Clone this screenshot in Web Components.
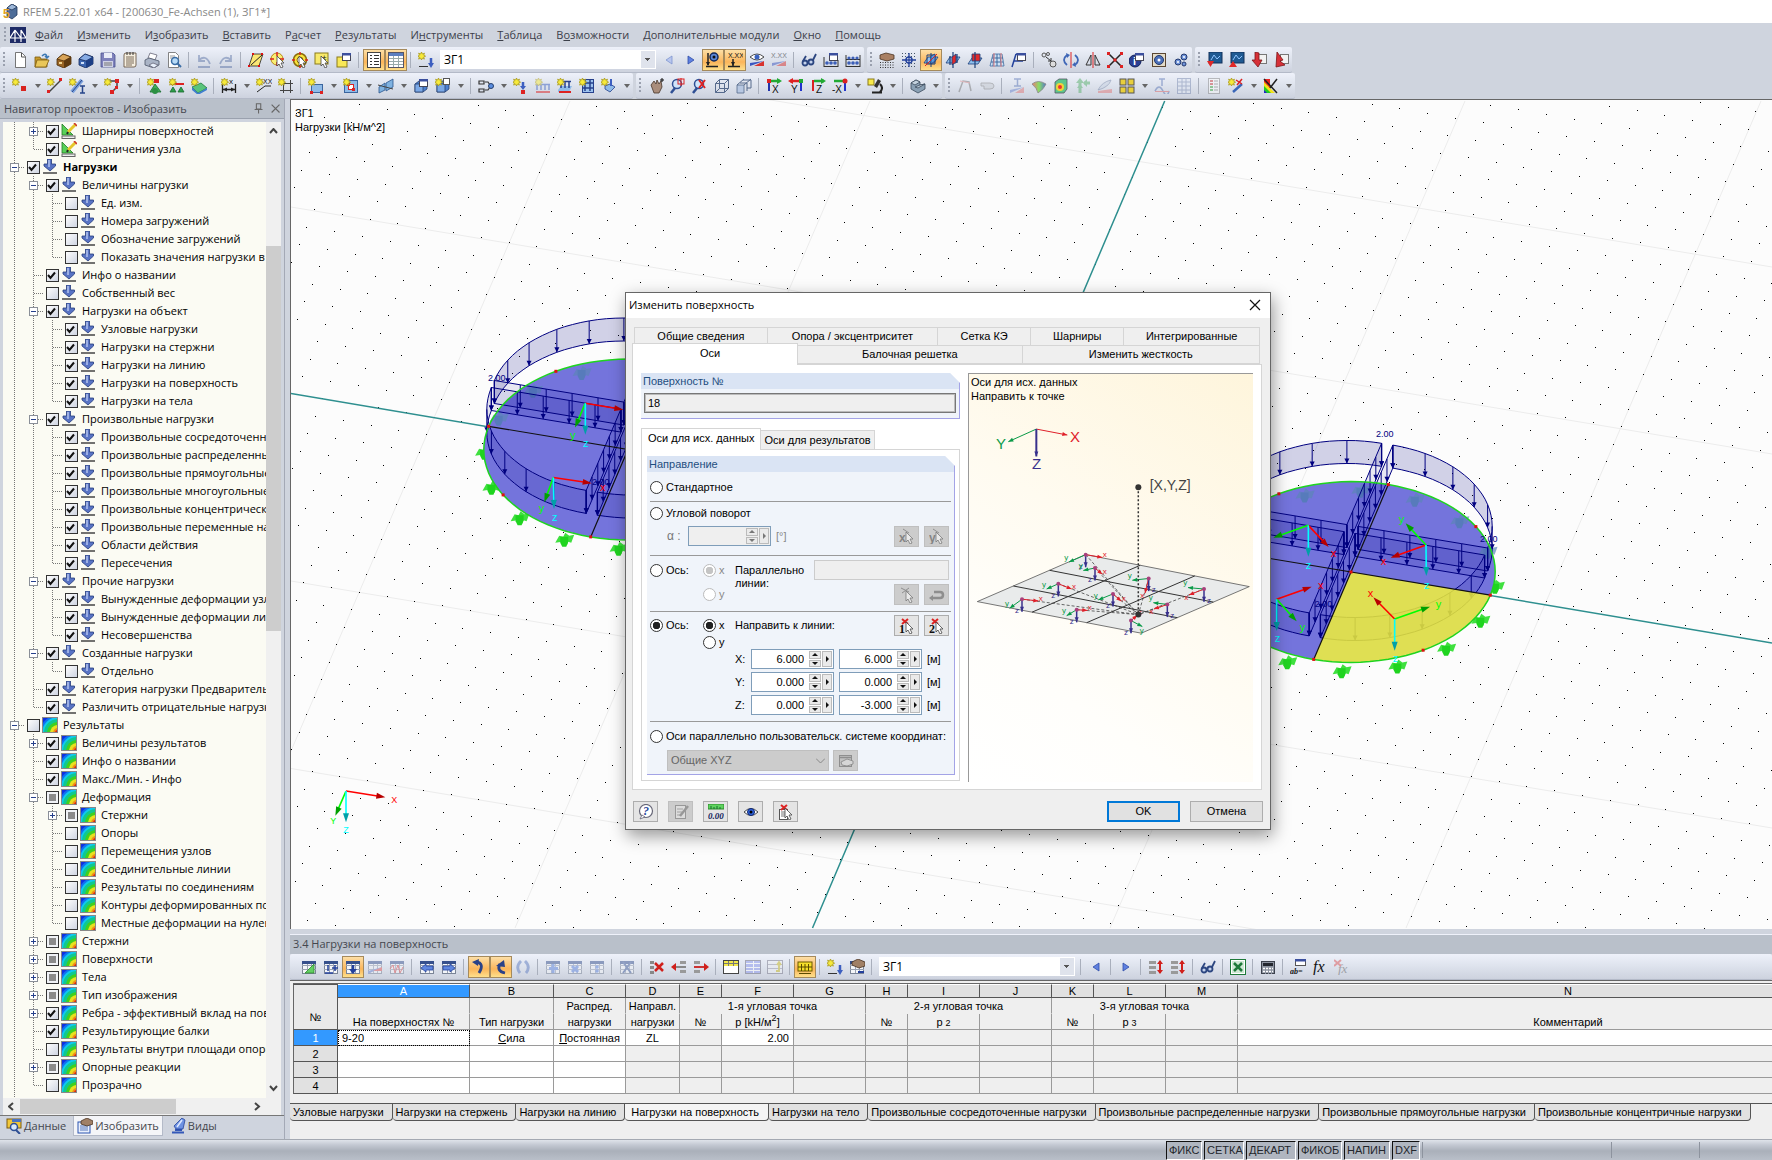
<!DOCTYPE html>
<html lang="ru">
<head>
<meta charset="utf-8">
<title>RFEM 5.22.01 x64 - [200630_Fe-Achsen (1), ЗГ1*]</title>
<style>
html,body{height:100%}
body{margin:0;overflow:hidden;background:#cfd4de;color:#000;font:11px/14px "Open Sans","Noto Sans",sans-serif}
</style>
</head>
<body>
<rfem-app></rfem-app>
<script>
/* ---------- drawing helpers ---------- */
const s=(d,c='#333',w=1)=>`<path d="${d}" fill="none" stroke="${c}" stroke-width="${w}"/>`;
const f=(d,c,k)=>`<path d="${d}" fill="${c}"${k?` stroke="${k}" stroke-width=".8"`:''}/>`;
const r=(x,y,w,h,c,k)=>`<rect x="${x}" y="${y}" width="${w}" height="${h}" fill="${c}"${k?` stroke="${k}"`:''}/>`;
const o=(x,y,q,c,k='none',w=1)=>`<circle cx="${x}" cy="${y}" r="${q}" fill="${c}" stroke="${k}" stroke-width="${w}"/>`;
const tx=(x,y,t,z,c='#111',e='')=>`<text x="${x}" y="${y}" font-size="${z}" fill="${c}" ${e}>${t}</text>`;
const star=f('M3.5 0 4.4 2 6.5 1.2 5.7 3.2 7.6 4.2 5.6 5 6.4 7.1 4.3 6.2 3.5 8 2.6 6.2.6 7.1 1.4 5-.4 4.2 1.5 3.2.6 1.2 2.6 2Z','#f7ea3a','#a99a1c');
const cur=f('M7 4v10l2-2 2 4 2-1-2-4h3Z','#fff','#444');
const redx=s('M3 1l6 5M9 1L3 6','#d22',2);
const cube=f('M2 6l4-3h8v8l-4 3H2Z','#4a7fd0','#26406e')+f('M2 6h8v8H2Z','#7aa8e6','#26406e');
const win=r(6.5,1.5,8,7,'#fff','#445')+r(6,1,9,2.5,'#3b4f9e');
const supp=(x,y)=>f(`M${x} ${y}l3 5h-6Z`,'#2d9d4a','#176b2e');
const sheet=r(1.5,2.5,13,12,'#f4f6f9','#7a8496')+s('M1 6.500h14M1 10.500h14M6.500 3v11M10.500 3v11','#9aa2b2')+r(1,2,14,3,'#36508c');
const grad='url(#rb)';
const I={
new:f('M3.500.5h6l4 4v11h-10Z','#fff','#555')+s('M9.500 1v4h4','#555'),
open:f('M1 5h5l1 2h6v8H1Z','#c79a2c','#7c5a10')+f('M3 8h12l-3 7H1Z','#e9c75a','#7c5a10')+s('M8 4q4-4 5 1M11 4l2 2 2-2','#3c78b4',1.500),
boxb:f('M1 7l6-5 8 3v7l-7 4-7-3Z','#9a6424','#4b2d0b')+f('M1 7l6-5 8 3-7 4Z','#d8a458','#4b2d0b')+r(3,10,3,2,'#f0d490')+f('M8 9l7-4v7l-7 4Z','#5f3a10'),
boxa:f('M1 7l6-5 8 3v7l-7 4-7-3Z','#3c66b0','#14295a')+f('M1 7l6-5 8 3-7 4Z','#86abe4','#14295a')+r(3,10,3,2,'#cfe0fa')+f('M8 9l7-4v7l-7 4Z','#1d3f86'),
save:f('M1 1h12l2 2v12H1Z','#7f82bc','#4a5090')+r(4,1,8,5,'#e9ecf8')+r(3,9,10,6,'#cfd2e6')+s('M4 11h8M4 13h8','#777'),
list:f('M2 3q0-2 2-2h10v12q0 2-2 2H2Z','#f6efe0','#5a4632')+s('M4 5h8M4 7h8M4 9h8M4 11h8M4 13h6','#7a6a58')+s('M5 0v3M8 0v3M11 0v3','#333'),
print:f('M4 6l2-5 7 2-2 5Z','#fff','#667')+f('M1 8l4-2 10 3v4l-5 3-9-3Z','#aab4c6','#4b5568')+f('M5 13l4-2 5 2-4 3Z','#e8f0fb','#667'),
prev:f('M2.500.5h7l3 3v12h-10Z','#fff','#666')+s('M4 4h5M4 6h6','#999')+o(9,9,3.500,'#b8dbf7','#3b6ea6',1.500)+s('M11 11l4 4','#3b6ea6',2),
undo:s('M3 8q7-6 11 4M3 3v6h6M2 15h12','#5f76a8',1.800),
redo:s('M13 8Q6 2 2 12M13 3v6H7M2 15h12','#5f76a8',1.800),
para:f('M5 2h10l-4 12H1Z','#fbe774','#222')+s('M3 13L14 3','#222')+r(4,1,2,2,'#d11')+r(13,1,2,2,'#d11')+r(0,13,2,2,'#d11')+r(10,13,2,2,'#d11'),
cirY:o(7,7,6,'#fbef72','#b58a1a')+s('M7 0v4M7 10v4M0 7h4M10 7h4','#d22',1.500)+cur,
ringY:o(8,8,6.500,'#f8e23c','#8a6c0a',1.500)+o(8,8,3,'#fff','#8a6c0a')+s('M8 0v3M8 13v3M0 8h3M13 8h3','#d22',1.500)+cur,
selY:r(1,1,13,11,'#f8ea6a','#8a7a1a')+tx(8,8,'±',8)+cur,
winY:r(1,5,10,10,'#f8e858','#8a7a1a')+win,
navA:r(1.500,.5,13,15,'#fff','#444')+s('M4 3.500h2M8 3.500h5M4 6.500h2M8 6.500h5M4 9.500h2M8 9.500h5M4 12.500h2M8 12.500h5','#333'),
tabA:r(.5,.5,15,15,'#fff','#556')+r(1,1,14,3,'#5b7fc0')+s('M1 6.500h14M1 9.500h14M1 12.500h14M5.500 4v11M10.500 4v11','#9aa'),
loadN:star+s('M1 14.500h9','#333')+s('M13 6v7','#3d5fc0',2.500)+f('M10 11h6l-3 5Z','#3d5fc0'),
prv:f('M11 4v8L5 8Z','#b8c6ee','#7f95cf'),
nxt:f('M5 4v8l6-4Z','#5f80e0','#2e4ca8'),
prd:f('M11 4v8L5 8Z','#5f80e0','#2e4ca8'),
eyeL:o(9,5,4,'#5c86d6','#14295a',1.500)+o(9,5,1.500,'#111')+s('M3 1v12M1 14.500h12','#222',1.500)+f('M1 10h4l-2 4Z','#222'),
xxL:tx(1,6,'X.XX',7)+s('M6 7v7M1 14.500h12','#222',1.500)+f('M4 10h4l-2 4Z','#222'),
eyeG:f('M1 5q7-6 14 0q-7 6-14 0Z','#fff','#222')+o(8,5,2.500,'#3a62c0')+f('M1 14V11l14-2Z','#3b55c0')+f('M15 9v5H5Z','#d8332f'),
xxG:tx(0,6,'X.XX',7)+f('M1 14V11l14-2Z','#3b55c0')+f('M15 9v5H5Z','#d8332f'),
glas:o(4,11,2.500,'#c4d2ec','#2c4680',1.800)+o(10,10,2.500,'#c4d2ec','#2c4680',1.800)+s('M2 9L5 4M12 8l3-6','#2c4680',1.800),
absA:win+s('M1 5v10M15 8v7M1 14.500h14','#333')+o(4,11,1.800,'#3c5fb8')+o(8,11,1.800,'#3c5fb8')+o(12,11,1.800,'#3c5fb8'),
abs:s('M1 3v12M15 3v12M1 14.500h14M1 7.500h14','#333')+o(4,6,1.600,'#3c5fb8')+o(8,6,1.600,'#3c5fb8')+o(12,6,1.600,'#3c5fb8')+o(4,11,1.800,'#3c5fb8')+o(8,11,1.800,'#3c5fb8')+o(12,11,1.800,'#3c5fb8'),
hand:f('M1 3l6-2 8 2v4l-7 2-7-2Z','#a98064','#4a3322')+`<path d="M1 10.500h14M1 13h14M1 15.500h14" stroke="#333" stroke-dasharray="1 1.500"/>`,
snap:`<path d="M1 1.500h14M1 4.500h14M1 11.500h14M1 14.500h14" stroke="#456" stroke-dasharray="1 2"/>`+o(8,8,3,'#fff','#24429c',1.500)+s('M8 1v14M1 8h14','#24429c',1.300),
pl:f('M1 11l4-6h10l-4 6Z','#8fc0ee','#1c3e78')+s('M8 1v14M4 3h8v9H4Z','#1c3e78')+f('M8 4l4-2v7l-4 3Z','#5b9ae0','#1c3e78')+s('M2 14l12-12','#d22'),
pl2:f('M1 11l4-6h10l-4 6Z','#8fc0ee','#1c3e78')+s('M8 0v16M5 4v9M12 2v9','#1c3e78',1.200)+f('M7 5l4-3v8l-4 3Z','#e22a2a','#1c3e78'),
pl3:f('M1 12l4-6h10l-4 6Z','#8fc0ee','#1c3e78')+f('M5 2h8v7H5Z','#e22a2a','#1c3e78')+s('M8 0v16','#1c3e78',1.200),
gridP:f('M4 2h9l2 12H1Z','#cfe2f5','#3d6a9e')+s('M3 6h11M2 10h12M8 2v12M5 2L4 14M11 2l1 12','#3d6a9e')+s('M5 1v14M12 1v14','#e88'),
planes:s('M1 15L5 2M3 9h9M5 2h5','#24429c',1.500)+win,
cp:o(3,3,2,'none','#555')+o(12,12,3,'#ddd','#555')+s('M5 5l5 4M10 6v3H7','#333')+o(7,2,1.500,'none','#555'),
rot:s('M4 3q-6 5 0 10M12 3q6 5 0 10','#3f66b6',1.800)+s('M8 0v16','#d22')+f('M3 1l4 2-3 3ZM13 15l-4-2 3-3Z','#3f66b6'),
mir:s('M6 3v10H1ZM10 3v10h5Z','#333')+s('M8 0v16','#d22'),
xred:s('M2 2l12 12M14 2L2 14','#222',1.500)+r(0,0,3,3,'#d22')+r(13,0,3,3,'#d22')+r(0,13,3,3,'#d22')+r(13,13,3,3,'#d22')+r(6.500,6.500,3,3,'#d22'),
info:o(6,9,6,'#2a3f94','#10205c')+tx(4,13,'i',11,'#fff','font-weight="bold"')+win,
gear:r(1.500,1.500,13,13,'#e4dcc8','#5a4632')+o(8,8,4.500,'#4b6fb8','#22386e')+o(8,8,1.500,'#fff'),
gears:o(5,10,3,'#6f93d8','#22386e')+o(11,5,3,'#6f93d8','#22386e')+o(11,12,2,'#6f93d8','#22386e')+o(5,10,1,'#fff')+o(11,5,1,'#fff'),
modA:r(2,0,13,11,'#1f5a92','#12305a')+s('M4 8l3-5 3 4 3-3','#8fc4ff')+f('M0 9h7l-3.500 6Z','#e02828'),
modB:r(2,0,13,11,'#1f5a92','#12305a')+s('M4 8l3-5 3 4 3-3','#8fc4ff')+f('M0 15h8l-4-6Z','#e02828'),
modC:r(7.500,2.500,8,9,'#f2f2f2','#777')+f('M4 0l4 1v7h3l-4 7-6-7h3Z','#d63038','#7c1518'),
modD:r(7.500,2.500,8,9,'#f2f2f2','#777')+f('M4 0l6 8-3 1 5 4-9 2Z','#d63038','#7c1518'),
node:star+r(9,8,5,5,'#d8241f'),
line:s('M2 14L14 2','#444',1.500)+star+r(0,12,3,3,'#d22')+r(12,0,3,3,'#d22'),
memb:s('M3 14L13 2','#7aa0dc',4)+s('M3 14L13 2','#27458a')+star+s('M11 8h5M11 15h5M13.500 8v7','#27458a',1.500),
poly:s('M4 3h9v6l-5 5','#444',1.500)+star+r(11,1,4,4,'#d22')+r(11,8,3,3,'#d22')+r(6,12,4,4,'#d22'),
sNode:f('M8 6l6 8H3Z','#3fae55','#176b2e')+o(8,13,3,'#2b8f42')+star+r(7,1,5,4,'#d22'),
sLine:s('M2 6h13','#d22',2)+supp(4,9)+supp(12,9)+star,
sSurf:f('M1 9l9-4 6 5-9 5Z','#59c47c','#1e7a3c')+f('M1 9v3l6 5v-2ZM16 10v2l-9 5v-2Z','#3f7fd0')+star,
dim:s('M1.500 6v9M14.500 6v9M1 11.500h14','#222',1.300)+f('M2 11.500l4-2v4ZM14 11.500l-4-2v4Z','#222')+tx(8,6,'x',8)+star,
dimx:s('M1 14L9 8h6','#222')+tx(7,6,'XX',7)+star,
gl:s('M5.500 2v13M12.500 2v13M2 5.500h13M2 12.500h13','#444')+star,
surf:r(3.500,6.500,11,8,'#8fbbe8','#3b659e')+star+r(12,13,3,3,'#d22')+r(2,13,3,3,'#d22'),
open2:r(1.500,2.500,13,12,'#8fbbe8','#3b659e')+r(5.500,6.500,5,5,'#fff','#d22')+r(4,5,3,3,'#d22')+r(9,10,3,3,'#d22')+star,
thick:f('M1 9l6-4v7l-6 3ZM8 5l7-4v8l-7 4Z','#7fb2e0','#2b568e')+s('M0 7l15 4','#444'),
solid:cube+win,
solidN:cube+r(8.500,.5,6,6,'#fff','#555')+star,
join:s('M1 3h5v3H1ZM1 11h5v3H1ZM7 4h3l2 3M7 12h3l2-3','#333',1.200)+o(13,8,2.500,'#5b8ee0','#26406e'),
ldN:star+s('M10 4v6','#3d5fc0',2.500)+f('M7 8h6l-3 4Z','#3d5fc0')+r(8,12,4,4,'#d22'),
ldL:s('M2 6v6M6 6v6M10 6v6M14 6v6M1 6.500h14','#3d5fc0',1.500)+s('M1 14h14','#d22',2)+star,
ldS:f('M1 12l3-4h11l-3 6H1Z','#8fbbe8')+s('M4 3v7M8 3v7M12 3v7M3 3.500h11','#26408c',1.500)+s('M2 14h12','#d22',2)+star,
ldF:r(3.500,1.500,11,13,'#9cc2ee','#26408c')+s('M4 5h11M4 10h11M6 1v12M11 1v12','#26408c',1.500)+star,
ldB:f('M4 8l5-2 5 3-5 5-5-3Z','#8fbbe8','#26408c')+s('M10 1v7','#3d5fc0',2)+star,
pan:f('M3 7l3-4 2 3 1-4 2 4 2-3 1 6-3 6H6Z','#a98d7c','#46352a')+s('M12 2h4M14 0v4','#111'),
zoomW:o(7,6,4.500,'#cfe4fa','#2f4f94',1.500)+s('M5 10l-4 5','#2f4f94',2.500)+r(8,1,6,5,'none','#d22')+s('M11 0v8','#d22'),
zoomX:o(7,6,4.500,'#cfe4fa','#2f4f94',1.500)+s('M5 10l-4 5','#2f4f94',2.500)+s('M7 2l6 8M13 2L7 10','#d22',2),
wire:s('M1.500 5.500h9v9h-9ZM5.500 1.500h9v9h-9ZM1.500 5.500l4-4M10.500 5.500l4-4M1.500 14.500l4-4M10.500 14.500l4-4','#566a8c'),
wire2:f('M1 7h7v8H1Z','#b8c8e2','#566a8c')+s('M4 5h7v8M7 2h8v8h-4M1 7l7-6M8 7l7-6','#566a8c'),
vx:s('M4 3h10','#2a3',2.500)+s('M3 2v11','#23a',2)+f('M11 0l5 3-5 3Z','#2a3')+tx(6,15,'X',10)+r(1,1,4,4,'#d22'),
vy:s('M2 3h10','#d22',2.500)+s('M13 2v11','#23c',2)+f('M5 0L0 3l5 3Z','#d22')+tx(3,15,'Y',10)+r(11,1,4,4,'#2a3'),
vz:s('M4 3h10','#2a3',2.500)+s('M3 2v11','#d22',2)+f('M11 0l5 3-5 3Z','#2a3')+tx(6,15,'Z',10),
vmx:s('M2 3h10','#2a3',2.500)+s('M13 2v11','#23c',2)+tx(0,15,'-X',10)+o(13,3,2.500,'#d22'),
mic:r(1,1,6,6,'#f8ea4a','#8a7a1a')+f('M11 1l3 2-4 7-3-2Z','#333')+s('M5 14.500h10M13 6q4 4 0 8','#222',2),
shade:f('M1 5l5-3 4 2V7l5-1v5l-7 4-7-4Z','#8aa0b4','#3b4a5c')+f('M1 5l5-3 4 2-5 3ZM5 9l5-2 5-1-7 4Z','#c4d2de','#3b4a5c'),
fr:s('M2 14L6 3l6 1 2 9','#777',1.500)+s('M3 3l10 2','#d88'),
cyl:f('M2 5h9q4 0 4 3t-4 3H5V8H2Z','#c8ccd2','#777'),
res1:s('M5 1h7M8.500 1v7M5 8h7','#5b76b6',1.500)+f('M1 15v-3l14-3Z','#6c86d0')+f('M15 9v6H6Z','#e07a7a'),
res2:f('M1 6q6-5 14 0-2 5-8 9-1-5-6-9Z',grad,'#888'),
res3:f('M2 4l4-3h8v10l-3 4H2Z','#5dc78a','#556')+o(7,9,4,'#f0d33a')+o(7,9,2,'#e33'),
res4:s('M5 3v12M9 5h6','#59b06c',3)+f('M5 0l4 5H1ZM8 5l4-4v8ZM2 10h6l-3-4Z','#59b06c'),
res5:f('M1 12q4-8 13-10-2 7-13 10Z','#c8d2e2','#66779a')+f('M1 15v-2l14-2v4Z','#e07a7a'),
res6:r(1,1,6,6,'#e8cf3c','#555')+r(9,1,6,6,'#e8cf3c','#555')+r(1,9,6,6,'#e8cf3c','#555')+r(9,9,6,6,'#e8cf3c','#555'),
res7:s('M5 1h6M8 1v7M1 13q4-8 8 0t6 0','#5b76b6',1.500)+s('M1 13.500h14','#d66'),
res8:r(1.500,.5,13,15,'#dfe6f2','#7a8ab0')+s('M2 4h12M2 8h12M2 12h12M6 1v14M10 1v14','#7a8ab0'),
doc:r(2.500,.5,11,15,'#fafafa','#888')+s('M4 3h3M4 6h3','#c44',2)+s('M4 9h3M4 12h3','#4a4',2)+s('M8 3h4M8 6h4M8 9h4M8 12h4','#777'),
ax:s('M5 14L14 6','#3a66b8',2.500)+star+s('M8 2l6 4M14 1L9 7','#d22',1.500),
rain:f('M1 1h6v14H1Z','#e22')+f('M1 4l11 11H1Z','#f3e21b')+f('M1 8l7 7H1Z','#2c2')+f('M1 12l3 3H1Z','#22c')+s('M14 1L7 10M1 1l13 14','#222',1.500),
tA:sheet+f('M4 14L13 5v9Z','#63cf63','#2b8a2b'),
tB:sheet+s('M5 6v6M2 14h8M9 9h6M12 6v6','#23409c',1.500),
tC:sheet+s('M8 6v5','#23409c',2.500)+f('M4 10h8l-4 5Z','#23409c'),
tD:sheet+f('M1 15v-3l14-4Z','#6c86d0')+f('M15 8v4H6Z','#e05a5a'),
tE:sheet+s('M1 10l3-4 2 8 3-8 2 8 3-6','#d44'),
aL:sheet+f('M2 9l5-4v2h7v4H7v2Z','#5f86de','#24429c'),
aR:sheet+f('M14 9l-5-4v2H2v4h7v2Z','#5f86de','#24429c'),
cl:s('M5 3q9 1 3 11','#2a4288',2.800)+f('M1 3l7-3-1 7Z','#2a4288'),
cr:s('M12 14q-9-2-5-9','#2a4288',2.800)+f('M3 7l8-6 1 7Z','#2a4288'),
cc:s('M5 14Q0 8 6 2M10 2q6 6 1 12','#5f7cc0',2.800),
gP:sheet+s('M8 5v9M4 9.500h9','#5f86de',3),gX:sheet+s('M5 7l6 6M11 7l-6 6','#5f86de',3),gD:sheet+o(8,8,1.800,'#5f86de')+o(8,12,1.800,'#5f86de'),
gV:sheet+s('M4 3l8 11M12 3L4 14','#46609c',2),
delR:r(1,2,4,3,'#888')+r(1,7,4,3,'#888')+r(1,12,4,3,'#888')+s('M6 4l8 8M14 4l-8 8','#d0201c',2.500),
insL:r(9,2,6,3,'#999')+r(9,11,6,3,'#999')+s('M3 8h12','#888',2)+f('M0 8l5-4v8Z','#d0201c'),
insR:r(1,2,6,3,'#999')+r(1,11,6,3,'#999')+s('M1 8h12','#c33',2)+f('M16 8l-5-4v8Z','#d0201c'),
tY:r(.5,1.500,15,13,'#fff','#444')+r(1,2,14,5,'#f2e84a')+s('M1 4.500h14M5.500 2v5M10.500 2v5','#777'),
tBl:r(.5,1.500,15,13,'#8c98ee','#667')+s('M1 4.500h14M1 8.500h14M1 11.500h14M8.500 2v12','#fff'),
tSt:r(.5,1.500,15,13,'#eef0f4','#778')+s('M1 5.500h14M1 9.500h14','#99a')+s('M9 12h3V4M10 6l2-3 2 3','#c9b91f',1.800),
absY:r(1,3,14,9,'#f6df2a','#6b5a00')+s('M2 14.500h12M4.500 5v7M8 5v7M11.500 5v7M1 8h14','#5a4a00'),
handT:sheet+f('M3 3l6-3 7 3v4l-6 2-7-3Z','#a08066','#4a3322')+s('M9 13h6','#23409c',2),
upd:r(1,2,7,3,'#999')+r(1,7,7,3,'#999')+r(1,12,7,3,'#999')+s('M12 2v12','#d0201c',2)+f('M9 5h6l-3-4ZM9 11h6l-3 4Z','#d0201c'),
xls:r(.5,.5,15,15,'#fff','#1f7a3a')+r(2,2,12,12,'#cfe8d4')+s('M4 4l8 8M12 4l-8 8','#1f7a3a',2.500),
calc:r(1.500,2.500,13,12,'#8c93a0','#3c414c')+r(3,4,10,3,'#23272f')+s('M3 9.500h10M3 12.500h10','#fff','1.500')+s('M5.500 8v7M8.500 8v7M11.500 8v7','#8c93a0'),
ab:r(5.500,.5,10,6,'#fff','#555')+r(5,0,11,2.500,'#3b4f9e')+tx(0,15,'ab=',8,'#111','font-style="italic" font-weight="bold" font-family="Liberation Serif"'),
fx:tx(1,13,'fx',16,'#111','font-style="italic" font-family="Liberation Serif"'),
fxx:tx(4,14,'fx',13,'#666','font-style="italic" font-family="Liberation Serif"')+s('M0 1l7 6M7 1L0 7','#d55',2),
pick:s('M2 1l8 4M10 1L3 6','#666')+cur,
px:tx(0,14,'x',12,'#555','font-weight="bold"')+s('M4 1l6 4','#666')+cur,
py:tx(0,14,'y',12,'#555','font-weight="bold"')+s('M4 1l6 4','#666')+cur,
back:s('M3 11h8q3 0 3-3t-3-3H5','#666',2.500)+f('M0 11l4-3v6Z','#666'),
p1:redx+tx(0,15,'1',12,'#111','font-weight="bold" font-family="Liberation Serif"')+cur,
p2:redx+tx(0,15,'2',12,'#111','font-weight="bold" font-family="Liberation Serif"')+cur,
ucs:r(1.500,2.500,12,11,'#bbb','#666')+s('M2 4.500h11','#666',1.500)+f('M3 9l6-3 6 2v3l-6 2-5-1Z','#ddd','#555'),
help:o(8,7,6.500,'#fff','#667',1.200)+f('M4 11l-2 4 5-2Z','#fff','#667')+tx(5,11,'?',12,'#23469c','font-weight="bold" font-style="italic" font-family="Liberation Serif"'),
edit:r(2.500,1.500,10,13,'#e8e8e8','#777')+s('M4 5h6M4 8h5M4 11h4','#888')+s('M15 2L7 12','#777',2.500),
unit:r(0,0,16,5,'#5fd35f','#2b8a2b')+s('M3 2v3M6 3v2M9 2v3M12 3v2','#176b2e')+tx(0,15,'0.00',9,'#14245c','font-style="italic" font-weight="bold" font-family="Liberation Serif" text-decoration="underline"'),
eye:f('M1 8q7-7 14 0-7 7-14 0Z','#fff','#222')+o(8,8,3.500,'#2d62e0','#12276b')+o(8,8,1.500,'#000'),
rep:r(1.500,5.500,8,10,'#fff','#555')+s('M3 8h5M3 10h5M3 12h5','#777')+redx+cur,
data:r(1,1,14,9,'#f2c83a','#7c5a10')+r(6,1,9,3,'#4b73c0')+o(8,9,3.500,'#d7e8fb','#2f4f94',1.500)+s('M10 12l4 4','#2f4f94',2),
show:r(1,4,12,11,'#eaf0fc','#2b55b0')+s('M3 8h8M3 10h8M3 12h8','#5576bb')+f('M4 3l6-3 6 3v3l-6 2-6-2Z','#a08066','#4a3322'),
views:s('M2 14.500h12M5 12h7','#3458b8',2)+f('M12 0l3 2-2 9H6L4 8Z','#6e92e2','#24429c')+s('M12 2L7 9','#dfe9ff',1.500),
ruler:f('M1 1v11h11Z','#58d058','#237a23')+s('M15 1L7 9','#e5c62a',3)+s('M13 0l3 3','#c33',1.500)+s('M7 9l-1 2','#222',2)+r(1,13,13,2.500,'#eee','#666'),
load:f('M5.500 0h4v5h4v2L8 12 2 7V5h3.500Z','#5873c4','#263c7c')+s('M7 1v7','#c3d2f6',1.300)+s('M1 14h14','#444',1.500),
rain2:`<rect x=".5" y=".5" width="15" height="15" fill="#1030e0" stroke="#888"/><clipPath id="q"><rect x="1" y="1" width="14" height="14"/></clipPath><g clip-path="url(#q)">`+o(16,16,18,'#1070f0')+o(16,16,16,'#10c8f0')+o(16,16,14,'#10c890')+o(16,16,11,'#3fd020')+o(16,16,8,'#e8e020')+o(16,16,5,'#f09018')+o(16,16,3,'#e02010')+'</g>',
app:f('M5 4l5-4 5 3v8l-5 4-5-3Z','#4c6c98','#22385c')+f('M5 4l5-4 5 3-5 3Z','#9db7d8','#22385c')+tx(1,14,'5',12,'#e0a020','font-weight="bold"'),
mdi:r(0,0,16,16,'#1d2a66')+s('M0 11h16M5 15V3M11 15V3M5 3L0 11M5 3l6 8M11 3l5 8','#fff',1.200),
pin:s('M5 2h5v6H5ZM3 8.500h9M7.500 9v4','#666',1.200),
cross:s('M3 3l9 9M12 3l-9 9','#666',1.300)
};
const svg=(n,z=16)=>`<svg width="${z}" height="${z}" viewBox="0 0 16 16" aria-hidden="true"><defs><linearGradient id="rb"><stop offset="0" stop-color="#e77"/><stop offset=".5" stop-color="#8d6"/><stop offset="1" stop-color="#57c"/></linearGradient></defs>${I[n]}</svg>`;
const UI='"Open Sans","Noto Sans",sans-serif', DLG='"Liberation Sans","Noto Sans",sans-serif';
const def=(n,render)=>customElements.define(n,class extends HTMLElement{
  constructor(){super();this.attachShadow({mode:'open'})}
  connectedCallback(){this.shadowRoot.innerHTML='<style>*{box-sizing:border-box}svg{display:block;flex:none;font-family:"Liberation Sans",sans-serif}button,input,select{font:inherit;color:inherit;margin:0}</style>'+render(this)}
});

/* ---------- toolbars ---------- */
def('tool-bar',e=>`<style>
:host{display:flex;align-items:center;height:26px;flex:none;background:linear-gradient(#eef1fa,#dfe4ee 45%,#cdd2de);border-radius:2px;border-bottom:1px solid #b4bac8}
.g{width:4px;height:16px;margin:0 3px 0 2px;flex:none;background:repeating-linear-gradient(#9aa0ae 0 2px,transparent 2px 4px) 1px 0/2px 100% no-repeat}
button{width:22px;height:22px;padding:0;border:1px solid transparent;background:none;display:grid;place-items:center;flex:none}
button.on{background:linear-gradient(#fddfa6,#fbb55a 60%,#fee08c);border-color:#a58a5c}
button.off svg{opacity:.5}
button.v{width:13px}
button.v::before{content:"";border:3px solid transparent;border-top:4px solid #666;border-bottom:0}
i{width:8px;height:16px;flex:none;background:linear-gradient(#a9afbc,#a9afbc) 3px 0/1px 100% no-repeat}
</style>${e.hasAttribute('plain')?'':'<span class="g"></span>'}`+e.getAttribute('items').trim().split(/\s+/).map(t=>{
 if(t==='|')return '<i></i>'; if(t==='v')return '<button class="v" aria-label="ещё"></button>'; if(t==='[]')return '<slot></slot>';
 const c=t.endsWith('*')?'on':t.endsWith('~')?'off':'',n=t.replace(/[*~]/,'');
 return `<button class="${c}" aria-label="${n}">${svg(n)}</button>`}).join(''));
def('combo-box',e=>`<style>:host{display:block;margin:0 2px 0 3px;flex:none}
select{width:100%;height:19px;border:0;border-radius:0;padding:0 0 0 4px;appearance:none;font:12px/16px ${UI};background:linear-gradient(#555,#555) right 6px top 8px/5px 1px no-repeat,linear-gradient(#555,#555) right 7px top 9px/3px 1px no-repeat,linear-gradient(#555,#555) right 8px top 10px/1px 1px no-repeat,linear-gradient(#dfe3ec,#dfe3ec) right 1px top 1px/14px 17px no-repeat,#fff}</style><select aria-label="Загружение"><option>ЗГ1</option></select>`);

/* ---------- menu ---------- */
def('main-menu',()=>`<style>:host{display:flex;align-items:center;height:24px;gap:14px;padding-left:4px;background:#cfd4de;color:#3c404a;font:11px/16px ${UI}}
button{border:0;background:none;padding:0}.g{width:4px;height:16px;background:repeating-linear-gradient(#9aa0ae 0 2px,transparent 2px 4px) 0 0/2px 100% no-repeat}
div{display:flex;gap:2px;margin-right:-5px}</style><div><span class="g"></span>${svg('mdi')}</div>`+
['<u>Ф</u>айл','<u>И</u>зменить','И<u>з</u>образить','<u>В</u>ставить','Р<u>а</u>счет','<u>Р</u>езультаты','И<u>н</u>струменты','<u>Т</u>аблица','В<u>о</u>зможности','<u>Д</u>ополнительные модули','<u>О</u>кно','<u>П</u>омощь'].map(t=>`<button>${t}</button>`).join(''));

/* ---------- navigator ---------- */
const T=`1+xr Шарниры поверхностей
1.xr Ограничения узла
0-xl Нагрузки
1-xl Величины нагрузки
2.ol Ед. изм.
2.ol Номера загружений
2.ol Обозначение загружений
2.ol Показать значения нагрузки в
1.xl Инфо о названии
1.ol Собственный вес
1-xl Нагрузки на объект
2.xl Узловые нагрузки
2.xl Нагрузки на стержни
2.xl Нагрузки на линию
2.xl Нагрузки на поверхность
2.xl Нагрузки на тела
1-xl Произвольные нагрузки
2.xl Произвольные сосредоточенные
2.xl Произвольные распределенные
2.xl Произвольные прямоугольные
2.xl Произвольные многоугольные
2.xl Произвольные концентрические
2.xl Произвольные переменные нагрузки
2.xl Области действия
2.xl Пересечения
1-xl Прочие нагрузки
2.xl Вынужденные деформации узлов
2.xl Вынужденные деформации линий
2.xl Несовершенства
1-xl Созданные нагрузки
2.ol Отдельно
1.xl Категория нагрузки Предварительное
1.xl Различить отрицательные нагрузки
0-oc Результаты
1+xc Величины результатов
1.xc Инфо о названии
1.xc Макс./Мин. - Инфо
1-hc Деформация
2+hc Стержни
2.oc Опоры
2.oc Перемещения узлов
2.oc Соединительные линии
2.oc Результаты по соединениям
2.oc Контуры деформированных поверхностей
2.oc Местные деформации на нулевых
1+hc Стержни
1+hc Поверхности
1+hc Тела
1+hc Тип изображения
1+xc Ребра - эффективный вклад на поверхность
1.xc Результирующие балки
1.oc Результаты внутри площади опоры
1+hc Опорные реакции
1.oc Прозрачно`.split('\n').map(l=>({lv:+l[0],tg:l[1],ck:l[2],ic:{r:'ruler',l:'load',c:'rain2'}[l[3]],t:l.slice(5)}));
const cont=(i,k)=>{ if(k===0)return true; for(let j=i+1;j<T.length;j++){if(T[j].lv===k)return true;if(T[j].lv<k)return false}return false};
def('nav-tree',()=>`<style>
:host{display:block;flex:1;min-width:0;overflow:hidden;padding-left:2px;background:#fbfbf3;font:11px/18px ${UI}}
label{display:flex;align-items:center;height:18px;white-space:nowrap}
b{font-weight:700}
.c{width:19px;height:18px;flex:none;display:grid;place-items:center;position:relative}
.v{background:repeating-linear-gradient(#777 0 1px,transparent 1px 2px) 9px 0/1px 100% no-repeat}
.h{background:repeating-linear-gradient(#777 0 1px,transparent 1px 2px) 9px 0/1px 10px no-repeat}
.e{width:9px;height:1px;position:absolute;left:10px;top:9px;background:repeating-linear-gradient(90deg,#777 0 1px,transparent 1px 2px)}
.t{width:9px;height:9px;border:1px solid #8a8f98;background:#fff linear-gradient(#26408c,#26408c) center/5px 1px no-repeat;position:relative}
.t.p{background:linear-gradient(#26408c,#26408c) center/5px 1px no-repeat,linear-gradient(#26408c,#26408c) center/1px 5px no-repeat,#fff}
input{appearance:none;width:13px;height:13px;flex:none;margin:0 2px 0 3px;border:1px solid #333;background:linear-gradient(135deg,#fdfdfd,#cfd5e2)}
.k{display:grid;flex:none}.k>*{grid-area:1/1}.k svg{margin:0 0 0 4px}
input.h2{background:linear-gradient(#8a8a8a,#8a8a8a) center/7px 7px no-repeat,#f0f2f6}
.s{margin-right:5px}
.cut{height:3px;overflow:hidden}
</style>`+T.map((n,i)=>{let g='';for(let k=0;k<n.lv;k++)g+=`<span class="c ${cont(i,k)?'v':''}"></span>`;
g+=`<span class="c ${cont(i,n.lv)?'v':'h'}"><span class="e"></span>${n.tg!=='.'?`<span class="t ${n.tg==='+'?'p':''}"></span>`:''}</span>`;
return `<label>${g}<span class="k"><input type="checkbox" ${n.ck==='x'?'checked':''} class="${n.ck==='h'?'h2':''}">${n.ck==='x'?'<svg width="11" height="13" viewBox="0 0 11 13"><path d="M1 6l2.500 3L8 3.500" fill="none" stroke="#111" stroke-width="2"/></svg>':''}</span><span class="s">${svg(n.ic,16)}</span>${i===2?`<b>${n.t}</b>`:`<span>${n.t}</span>`}</label>`}).join('')+
`<div class="cut"><label><span class="c v"></span><input type="checkbox" aria-label="раздел"></label></div>`);
def('nav-panel',()=>`<style>
:host{display:flex;flex-direction:column;width:285px;flex:none;font:11px/18px ${UI};border-right:1px solid #a4a9b6;background:#cfd4de}
header{display:flex;align-items:center;height:20px;padding:0 1px 0 4px;gap:3px;background:#b9c0ca;color:#44474e;border-bottom:1px solid #9aa1ae}
header span{flex:1}
.b{flex:1;min-height:0;display:flex;margin:3px 3px 0 3px}
.sv{width:15px;flex:none;display:flex;flex-direction:column;align-items:center;justify-content:space-between;padding:6px 0;background:linear-gradient(#cdcdcd,#cdcdcd) 0 124px/15px 385px no-repeat,#f0f0f0}
.sh{height:17px;flex:none;margin:0 3px;display:flex;align-items:center;justify-content:space-between;padding:0 20px 0 5px;background:linear-gradient(#cdcdcd,#cdcdcd) 17px 1px/156px 15px no-repeat,#f0f0f0}
nav{display:flex;height:24px;align-items:flex-start;gap:4px;padding-left:3px;border-top:1px solid #777}
nav button{display:flex;align-items:center;gap:2px;height:20px;padding:0 3px;border:0;background:none;color:#44474e}
nav .on{background:#f4f5f8;border:1px solid #b4bac8;border-top:0}
</style><header><span>Навигатор проектов - Изобразить</span>${svg('pin',14)}${svg('cross',14)}</header>
<div class="b"><nav-tree></nav-tree><div class="sv"><svg width="9" height="7"><path d="M1 5l3.500-4L8 5" fill="none" stroke="#444" stroke-width="2"/></svg><svg width="9" height="7"><path d="M1 1l3.500 4L8 1" fill="none" stroke="#444" stroke-width="2"/></svg></div></div>
<div class="sh"><svg width="7" height="9"><path d="M5 1L1 4.500 5 8" fill="none" stroke="#444" stroke-width="2"/></svg><svg width="7" height="9"><path d="M1 1l4 3.500L1 8" fill="none" stroke="#444" stroke-width="2"/></svg></div>
<nav><button>${svg('data')}Данные</button><button class="on">${svg('show')}Изобразить</button><button>${svg('views')}Виды</button></nav>`);

/* ---------- model view ---------- */
function model(){
 const u=[27.8,4.62],v=[-7.49,17.5]; let d='';
 for(let b=-60;b<60;b++)for(let a=-30;a<80;a++){const x=304.3+a*u[0]+b*v[0],y=301.4+a*u[1]+b*v[1];if(x>291&&x<1772&&y>102&&y<928)d+=`M${Math.round(x)} ${Math.round(y)+.5}h1`}
 let h=`<path d="${d}" stroke="#000" shape-rendering="crispEdges"/>`;
 for(const y of [-354,-167,20,207,581,768.500])h=s(`M291 ${y}L1772 ${y+247}`,'#ececec')+h;
 for(const x of [489,789,1384,1680])h=s(`M${x+81} 101L${x-274} 928`,'#ececec')+h;
 h+=s('M291 393.600L1772 643M1164.700 101L812.500 928','#2e8f8f',1.500);
 const N='#000080';
 const dn=(x,y,c)=>f(`M${x-2.500} ${y-5}h5l-2.500 5Z`,c);
 function disc(cx,cy,yellow){
  const A=[139.300,23.200],B=[-37.300,87.400];
  const P=(p,q,z=0)=>[cx+p*A[0]+q*B[0],cy+p*A[1]+q*B[1]-z];
  const C=t=>P(Math.cos(t),Math.sin(t));
  const j=a=>a.map(p=>p[0].toFixed(1)+' '+p[1].toFixed(1)).join('L');
  const ring=[];for(let i=0;i<96;i++)ring.push(C(i*Math.PI/48));
  const sp=(x,y,c,k)=>f(`M${x-9} ${y+3}l4-7 4 1 2-4 4 3 5-1-3 8-3-1-1 3q-3 2-5 0v-3Z`,c)+f(`M${x-4} ${y-3}l8 0 0 5-2 5h-4l-2-4Z`,k);
  let back='',front='';
  for(let i=0;i<16;i++){const t=Math.PI/16+i*Math.PI/8,p=C(t),bk=p[1]<cy-22,k=bk?sp(p[0],p[1]+9,'#5c86b8','#4c7fae'):sp(p[0],p[1]+9,'#3fe03f','#1fd41f');if(bk)back+=k;else front+=k}
  h+=front+f('M'+j(ring)+'Z','#7474dc')+`<g opacity=".7">${back}</g>`;
  let w='';
  for(const [a,b] of [[1,1],[-1,1],[-1,-1],[1,-1]]){const dl=.04;
   const seg=(p0,p1,n)=>{const m=[];for(let i=0;i<=n;i++)m.push([p0[0]+(p1[0]-p0[0])*i/n,p0[1]+(p1[1]-p0[1])*i/n]);return m};
   const arc=[];for(let i=0;i<=24;i++){const t=i/24*Math.PI/2;arc.push([a*(dl+.93*Math.cos(t)),b*(dl+.93*Math.sin(t))])}
   const sides=[[arc,4],[seg([a*dl,b*dl],[a*.97,b*dl],5),1],[seg([a*dl,b*dl],[a*dl,b*.97],6),1]];
   for(const [m,st] of sides){const lo=m.map(q=>P(q[0],q[1],20)),hi=m.map(q=>P(q[0],q[1],43));
    w+=`<path d="M${j(lo)}L${j([...hi].reverse())}Z" fill="#000080" fill-opacity="${st===4?(b<0?.17:.1):.08}" stroke="${N}"/>`;
    for(let i=0;i<m.length;i+=(st===4?4:1)){w+=s(`M${hi[i]}L${lo[i]}`,N,1)+dn(lo[i][0],lo[i][1],N)}}
  }
  h+=w;
  if(yellow){const q=[P(0,0)];for(let i=0;i<=24;i++)q.push(C(i/24*Math.PI/2));h+=f('M'+j(q)+'Z','rgba(246,246,52,.82)')}
  h+=s('M'+j([P(-1,0),P(1,0)])+'M'+j([P(0,-1),P(0,1)]),'#111',1.200)+s('M'+j(ring)+'Z','#1fd41f',1.500);
  for(let i=0;i<8;i++){const p=C(i*Math.PI/4);h+=r(p[0]-1.500,p[1]-1.500,3,3,'#e01010')}
  h+=r(cx-1.500,cy-1.500,3,3,'#e01010');
 }
 disc(628,449.500,false);disc(1351,572,true);
 const arr=(x,y,X,Y,c,k)=>{const l=Math.hypot(X-x,Y-y),p=(X-x)/l,q=(Y-y)/l;return s(`M${x} ${y}L${X-p*8} ${Y-q*8}`,c,1.600)+f(`M${X} ${Y}L${X-p*9-q*3} ${Y-q*9+p*3}L${X-p*9+q*3} ${Y-q*9-p*3}Z`,k)};
 const T3=(M,c,x,y,z,lx,ly,lz,up)=>{const a=M(...c),X=M(...x),Y=M(...y),Z=M(...z);h+=arr(...a,...X,'#f00','#b80000')+arr(...a,...Y,'#0f0','#00a000')+arr(...a,...Z,'#0ff','#00a0a8');
  [[lx,'x','#f00'],[ly,'y','#0f0'],[lz,'z','#0ff']].forEach(([p,t,k])=>{if(p){const q=M(...p);h+=tx(q[0]-3,q[1]+3,up?t.toUpperCase():t,up?9:11,k)}})};
 const m11=(x,y)=>[290+x/3,290+y/2.8],m12=(x,y)=>[1240+x/3,410+y/3];
 T3(m11,[886,317],[1000,335],[855,385],[886,405],0,[849,408],[888,430]);
 T3(m11,[790,525],[905,541],[763,594],[792,613],[939,553],[755,613],[795,637]);
 T3(m11,[168,1403],[286,1420],[136,1472],[168,1490],[313,1427],[130,1488],[169,1513],true);
 T3(m12,[205,346],[266,411],[100,383],[205,440],[281,432],0,[206,467]);
 T3(m12,[110,568],[215,530],[170,634],[110,663],[243,527],[188,655],[113,688]);
 T3(m12,[558,405],[452,443],[497,340],[559,498],[431,457],[485,330],[561,527]);
 T3(m12,[464,627],[400,562],[570,590],[464,722],[392,551],[596,585],[467,748]);
 for(const p of [m11(618,245),m11(930,538),m12(432,71),m12(744,386),m12(248,583)])h+=tx(p[0]-8,p[1]+3,'2.00',9,N);
 h+=tx(295,117,'ЗГ1',11,'#000')+tx(295,131,'Нагрузки [kH/м^2]',11,'#000');
 return h;
}
def('model-view',()=>`<style>:host{display:block;flex:1;min-height:0;background:#fcfcfc;border:solid #666;border-width:1px 0 0 1px;overflow:hidden}
svg{width:100%;height:100%;font-family:"Liberation Sans",sans-serif}</style><svg><g transform="translate(-291 -100)">${model()}</g></svg>`);

/* ---------- table ---------- */
def('load-table',()=>{
 const W=[45,132,84,72,54,42,72,72,42,72,72,42,72,72,661];
 return `<style>:host{display:block;overflow:hidden;flex:none;background:#efefef;border-top:1px solid #666;padding:2px 0 9px 3px;font:11px/14px ${DLG}}
table{border-collapse:separate;border-spacing:0;table-layout:fixed;width:1606px;border:solid #666;border-width:1px 0 0 0}
th,td{font-weight:400;padding:0;text-align:center;height:16px;line-height:14px;border:solid #9a9a9a;border-width:0 1px 1px 0;white-space:nowrap;overflow:hidden}
.l th{height:14px;line-height:12px;background:#e1e1e1;border-color:#555;border-top:1px solid #fff}
.l .a,.n.a{background:#3399ff;color:#fff}
.n,.l .n{background:#e1e1e1;border-color:#555;border-left:1px solid #666}
.l .no{background:#e9e9e9;padding-top:20px}
.h th{background:#efefef;border-bottom-color:#efefef}
.h2 th{border-bottom-color:#9a9a9a}
.w{background:#fff}.g{background:#efefef}
.f{outline:1px dotted #000;outline-offset:-1px;text-align:left;padding-left:4px}
.R{text-align:right;padding-right:4px}sup{font-size:9px;line-height:0}sub{font-size:9px;line-height:0;vertical-align:baseline}
</style><table><colgroup>${W.map(w=>`<col style="width:${w}px">`).join('')}</colgroup>
<tr class="l"><th rowspan="3" class="n no">№</th>${'ABCDEFGHIJKLMN'.split('').map((c,i)=>`<th class="${i?'':'a'}">${c}</th>`).join('')}</tr>
<tr class="h"><th></th><th></th><th>Распред.</th><th>Направл.</th><th colspan="3">1-я угловая точка</th><th colspan="3">2-я угловая точка</th><th colspan="3">3-я угловая точка</th><th></th></tr>
<tr class="h h2"><th>На поверхностях №</th><th>Тип нагрузки</th><th>нагрузки</th><th>нагрузки</th><th>№</th><th>p [kH/м<sup>2</sup>]</th><th></th><th>№</th><th>p <sub>2</sub></th><th></th><th>№</th><th>p <sub>3</sub></th><th></th><th>Комментарий</th></tr>
<tr><th class="n a">1</th><td class="w f">9-20</td><td class="w"><u>С</u>ила</td><td class="w"><u>П</u>остоянная</td><td class="w">ZL</td><td class="g"></td><td class="w R">2.00</td>${'<td class="g"></td>'.repeat(7)}<td class="w"></td></tr>
${[2,3,4].map(n=>`<tr><th class="n">${n}</th>${'<td class="w"></td>'.repeat(3)}${'<td class="g"></td>'.repeat(11)}</tr>`).join('')}</table>`});
def('sheet-tabs',()=>`<style>:host{display:flex;height:36px;flex:none;align-items:flex-start;background:#efefef;border-top:1px solid #555;font:11px/16px ${DLG};overflow:hidden}
button{height:17px;padding:0 8px 0 3px;border:1px solid #555;border-top:0;border-left-width:0;background:#e1e1e1;border-radius:0 0 4px 4px;white-space:nowrap;line-height:16px}
button.on{background:#f4f4f4;padding:0 9px 0 6px}</style>`+['Узловые нагрузки','Нагрузки на стержень','Нагрузки на линию','Нагрузки на поверхность','Нагрузки на тело','Произвольные сосредоточенные нагрузки','Произвольные распределенные нагрузки','Произвольные прямоугольные нагрузки','Произвольные концентричные нагрузки'].map((t,i)=>`<button class="${i===3?'on':''}">${t}</button>`).join(''));
def('status-bar',()=>`<style>:host{display:flex;justify-content:flex-end;height:21px;flex:none;border-top:1px solid #a4a9b2;background:linear-gradient(#dfe3ea,#c3c8d2 25%,#aab0ba 55%,#b9bfc9);padding-top:1px;font:11px/16px ${DLG};color:#23262c}
span{height:19px;margin-right:2px;border:1px solid #111;border-right-color:#fff;border-bottom-color:#fff;padding-left:2px;white-space:nowrap;background:#b0b6c0}
i{border-left:1px solid #8d939e;margin:1px 0 2px}</style>`+[['ФИКС',36],['СЕТКА',40],['ДЕКАРТ',50],['ФИКОБ',44],['НАПИН',46],['DXF',28]].map(([t,w])=>`<span style="width:${w}px">${t}</span>`).join('')+'<i style="width:189px"></i><i style="width:88px"></i><i style="width:73px"></i>');

/* ---------- dialog ---------- */
def('spin-box',e=>{const d=e.hasAttribute('disabled');return `<style>:host{display:flex;width:83px;height:20px;background:${d?'#efefef':'#fff'};border:1px solid #7f9db9;padding:1px}
input{flex:1;min-width:0;border:0;background:none;text-align:right;padding:0 5px 0 0}
div{display:flex;flex-direction:column;gap:1px;width:12px;margin-right:1px}
button{border:1px solid #bbb;background:#eaeaea;padding:0;display:grid;place-items:center;flex:1;min-height:0}
.s{width:10px;flex:none}.u::before{content:"";border:3px solid transparent;border-bottom:3px solid ${d?'#777':'#111'};border-top:0}.d::before{content:"";border:3px solid transparent;border-top:3px solid ${d?'#777':'#111'};border-bottom:0}
.s::before{content:"";border:3px solid transparent;border-left:3px solid ${d?'#777':'#111'};border-right:0}</style>
<input type="text" aria-label="${e.getAttribute('label')}" value="${e.getAttribute('value')||''}" ${d?'disabled':''}><div><button class="u" aria-label="больше"></button><button class="d" aria-label="меньше"></button></div><button class="s" aria-label="ещё"></button>`});
def('icon-button',e=>`<style>:host{display:block;width:25px;height:21px}button{width:100%;height:100%;padding:0;border:1px solid #adadad;background:#e4e4e4;display:grid;place-items:center}button:disabled{background:#ccc;border-color:#bfbfbf}button:disabled svg{opacity:.6}</style><button aria-label="${e.getAttribute('icon')}" ${e.hasAttribute('disabled')?'disabled':''}>${svg(e.getAttribute('icon'))}</button>`);
def('group-box',e=>`<style>:host{display:block;background:#f0f4fa;border-right:1px solid #a3a3e6;border-bottom:1px solid #a3a3e6;clip-path:polygon(0 0,calc(100% - 10px) 0,100% 10px,100% 100%,0 100%)}
h2{margin:0;height:16px;padding-left:2px;font:inherit;line-height:16px;color:#1f4e80;background:#dae4f4}</style><h2>${e.getAttribute('heading')}</h2><slot></slot>`);
function preview(){
 const M=(x,y)=>[(x-55)/3,(y-237)/2.851],p=(x,y)=>M(x,y).map(n=>n.toFixed(1)).join(' ');
 const R='#e0202a',G='#0a9a48',Bl='#38308c';let h='';
 const ar=(a,b,c,w=1)=>{const A=M(...a),B=M(...b),l=Math.hypot(B[0]-A[0],B[1]-A[1]),x=(B[0]-A[0])/l,y=(B[1]-A[1])/l;return s(`M${A}L${B}`,c,w)+f(`M${B}L${B[0]-x*5-y*2} ${B[1]-y*5+x*2}L${B[0]-x*5+y*2} ${B[1]-y*5-x*2}Z`,c)};
 h+=ar([257,394],[350,411],R)+ar([257,394],[173,430],G)+ar([257,394],[257,472],Bl,2);
 h+=tx(...M(358,430),'X',15,R)+tx(...M(136,451),'Y',15,G)+tx(...M(244,509),'Z',15,Bl)+tx(...M(597,569),'[X,Y,Z]',14,'#444');
 const a=[80,886],b=[405,752],c=[896,843],d=[572,976],mix=(m,n,t)=>[m[0]+(n[0]-m[0])*t,m[1]+(n[1]-m[1])*t];
 h+=f(`M${p(...a)}L${p(...b)}L${p(...c)}L${p(...d)}Z`,'#e9ebeb','#555');
 for(const t of [1/3,2/3])h+=s(`M${p(...mix(a,b,t))}L${p(...mix(d,c,t))}M${p(...mix(a,d,t))}L${p(...mix(b,c,t))}`,'#333');
 const Tr=[[405,752,455,760,355,773],[433,790,455,808,398,797],[323,835,363,850,288,850],[594,820,583,862,545,825],[487,864,512,885,443,881],[214,879,263,884,177,905],[378,909,410,911,348,926],[650,894,610,907,608,889],[760,850,715,867,712,846],[541,940,560,925,575,957]];
 for(const t of Tr)h+=`<path d="M${p(t[0],t[1])}L${p(563,923)}" stroke="#444" stroke-width=".8" stroke-dasharray="3 2"/>`;
 for(const t of Tr){h+=ar([t[0],t[1]],[t[2],t[3]],R)+ar([t[0],t[1]],[t[4],t[5]],G)+ar([t[0],t[1]],[t[0],t[1]+36],Bl,1.500)+o(...M(t[0],t[1]),2,'#a8407c');
  const e=(X,Y,l,k)=>{const q=M(X,Y);return tx(q[0]-2,q[1]+2,l,8,k)};h+=e(t[2]+(t[2]>t[0]?7:-8),t[3]+(t[2]>t[0]?-6:8),'x',R)+e(t[4]+(t[4]>t[0]?-2:-8),t[5]-(t[4]>t[0]?-12:12),'y',G)+e(t[0]+(t[2]>t[0]?-15:15),t[1]+34,'z',Bl)}
 h+=`<path d="M${p(563,560)}L${p(563,923)}" stroke="#333" stroke-width="1.500" stroke-dasharray="2 2"/>`+o(...M(563,560),3,'#333')+o(...M(563,923),3,'#333');
 return h;
}
def('edit-dialog',()=>`<style>
:host{display:flex;flex-direction:column;width:646px;background:#efefef;border:1px solid #666;box-shadow:2px 6px 16px rgba(0,0,0,.4);font:11px/13px ${DLG}}
header{display:flex;align-items:center;justify-content:space-between;height:25px;padding:0 9px 1px 3px;background:#fff;font:11px/16px ${UI}}
header button{border:0;background:none;padding:0;width:12px;height:12px}
.pages{margin:9px 8px 0 6px}
.row{display:flex;margin:0 2px}
.row button,.sub button{border:1px solid #d5d5d5;background:#efefef;padding:0;height:19px;border-left-width:0}
.row button:first-child{border-left-width:1px}
.row.a button{border-bottom:0;height:18px}
.row.b{margin-left:0}
.row.b button{height:19px}
.row.b .on{background:#fff;border-bottom:0;border-left:1px solid #d5d5d5;margin:-2px 0 -1px;height:22px;padding:0 10px 2px 0}
.page{background:#fff;border:1px solid #d5d5d5;display:flex;gap:8px;padding:8px 8px 7px}
.left{width:319px}
.left>group-box{height:46px}
.no{display:block;margin:4px 3px;width:312px;height:20px;border:1px solid #777;box-shadow:inset 0 0 0 1px #bbb;background:#efefef;padding:0 3px}
.sub{display:flex;align-items:flex-end;margin-top:9px}
.sub button{height:19px;border-bottom:0;padding:0 3px}
.sub .on{background:#fff;height:22px;padding:0 6px 2px;border-left:1px solid #d5d5d5;margin-bottom:-1px;position:relative}
.in{border:1px solid #d5d5d5;padding:6px 4px 5px 5px;width:319px}
.sec{margin:0 3px;padding-right:2px;border-bottom:1px solid #999;display:grid;align-items:center}
.sec:last-child{border:0}
label{display:flex;align-items:center;gap:3px;white-space:nowrap}
input[type=radio]{appearance:none;width:13px;height:13px;border:1px solid #333;border-radius:50%;background:#fff;flex:none}
input[type=radio]:checked{background:radial-gradient(#222 0 3.500px,#fff 4px)}
.dis{color:#888}.dis input[type=radio]{border-color:#bbb}.dis input[type=radio]:checked{background:radial-gradient(#c4c4c4 0 3.500px,#fff 4px)}
.two{display:flex;gap:5px;justify-content:flex-end}
.s1{height:30px;padding-top:2px}
.s2{grid-template-columns:38px 83px 1fr auto;grid-template-rows:20px 20px;row-gap:3px;height:54px;padding-bottom:9px;padding-top:1px}
.s2 label{grid-column:1/-1}.s2 .al{padding-left:17px;font-size:12px;color:#777}
.s3{grid-template-columns:53px 32px 79px 1fr;grid-template-rows:20px 21px;row-gap:4px;height:56px;padding:4px 2px 6px 0}
.c1r1{grid-area:1/1}.c2r1{grid-area:1/2}.c2r2{grid-area:2/2}.c3r1{grid-area:1/3}
.s3 .t{grid-area:1/3/3/4;align-self:start;padding-top:4px}
.s3 input[type=text]{grid-area:1/4;width:100%;height:20px;border:1px solid #ccc;background:#efefef}
.s3 .two{grid-area:2/4}
.s4{grid-template-columns:53px 32px 1fr auto;grid-template-rows:21px 13px auto;height:110px;padding:3px 2px 0 0;align-content:start}
.s4 .two{grid-area:1/4}
.xyz{grid-area:3/3/4/5;display:grid;grid-template-columns:11px 83px 83px 1fr;column-gap:5px;row-gap:3px;align-items:center}
.s5{height:52px;grid-template-rows:28px 21px;align-content:start}
.s5 div{display:flex;gap:4px;padding-left:17px}
select{width:162px;height:21px;appearance:none;border:1px solid #bfbfbf;border-radius:0;background:#ccc;color:#666;padding:0 3px;opacity:1}
.pick{display:grid}.pick>*{grid-area:1/1}.pick svg{justify-self:end;align-self:center;margin-right:4px}
.pv{flex:1;min-width:0;border:solid #999;border-width:1px 0 0 1px;background:linear-gradient(215deg,#fef5dc,#fffbf0 45%,#fffefb 75%,#fff);display:grid}
.pv>*{grid-area:1/1}.pv p{margin:1px 0 0 2px;line-height:14px}
footer{display:flex;gap:10px;padding:11px 7px 6px;height:39px}
footer>span{flex:1}
footer>button{width:73px;height:21px;border:1px solid #adadad;background:#e1e1e1;padding:0}
footer>.ok{border:2px solid #0078d7}
</style>
<header><span>Изменить поверхность</span><button aria-label="Закрыть"><svg width="12" height="12"><path d="M1 1l10 10M11 1L1 11" stroke="#111" stroke-width="1.200"/></svg></button></header>
<div class="pages">
<div class="row a">${[['Общие сведения',133],['Опора / эксцентриситет',171],['Сетка КЭ',93],['Шарниры',93],['Интегрированные',136]].map(([t,w])=>`<button style="flex:${w} 1 0">${t}</button>`).join('')}</div>
<div class="row b">${[['Оси',155],['Балочная решетка',225],['Изменить жесткость',238]].map(([t,w],i)=>`<button class="${i?'':'on'}" style="flex:${w} 1 0">${t}</button>`).join('')}</div>
<div class="page"><div class="left">
<group-box heading="Поверхность №"><input class="no" type="text" aria-label="Поверхность №" value="18"></group-box>
<div class="sub"><button class="on">Оси для исх. данных</button><button>Оси для результатов</button></div>
<div class="in"><group-box heading="Направление">
<div class="sec s1"><label><input type="radio" name="m">Стандартное</label></div>
<div class="sec s2"><label><input type="radio" name="m">Угловой поворот</label><span class="al">α :</span><spin-box disabled label="Угол α"></spin-box><span class="dis" style="padding-left:5px">[°]</span><span class="two"><icon-button icon="px" disabled></icon-button><icon-button icon="py" disabled></icon-button></span></div>
<div class="sec s3"><label class="c1r1"><input type="radio" name="m">Ось:</label><label class="dis c2r1"><input type="radio" name="p" checked disabled>x</label><label class="t" for="ln">Параллельно<br>линии:</label><input type="text" id="ln" disabled><label class="dis c2r2"><input type="radio" name="p" disabled>y</label><span class="two"><icon-button icon="pick" disabled></icon-button><icon-button icon="back" disabled></icon-button></span></div>
<div class="sec s4"><label class="c1r1"><input type="radio" name="m" checked>Ось:</label><label class="c2r1"><input type="radio" name="q" checked>x</label><span class="c3r1">Направить к линии:</span><span class="two"><icon-button icon="p1"></icon-button><icon-button icon="p2"></icon-button></span><label class="c2r2"><input type="radio" name="q">y</label>
<div class="xyz">${[['X','6.000','6.000'],['Y','0.000','0.000'],['Z','0.000','-3.000']].map(([a,b,c])=>`<span>${a}:</span><spin-box label="${a} 1" value="${b}"></spin-box><spin-box label="${a} 2" value="${c}"></spin-box><span>[м]</span>`).join('')}</div></div>
<div class="sec s5"><label><input type="radio" name="m">Оси параллельно пользовательск. системе координат:</label><div><span class="pick"><select disabled aria-label="Система координат"><option>Общие XYZ</option></select><svg width="9" height="6"><path d="M0 .5l4.500 4.500L9 .5" fill="none" stroke="#888"/></svg></span><icon-button icon="ucs" disabled></icon-button></div></div>
</group-box></div></div>
<div class="pv"><svg width="285" height="408">${preview()}</svg><p>Оси для исх. данных<br>Направить к точке</p></div>
</div></div>
<footer><icon-button icon="help"></icon-button><icon-button icon="edit" disabled></icon-button><icon-button icon="unit"></icon-button><icon-button icon="eye"></icon-button><icon-button icon="rep"></icon-button><span></span><button class="ok">OK</button><button>Отмена</button></footer>`);

/* ---------- application window ---------- */
def('rfem-app',()=>`<style>
:host{display:flex;flex-direction:column;height:100vh;min-height:700px;position:relative;background:#cfd4de}
.title{display:flex;align-items:center;gap:5px;height:23px;flex:none;padding-left:2px;background:#fff;color:#888;font:11px/16px ${UI}}
main-menu{flex:none}
.bars{display:flex;background:#cfd4de;flex:none;gap:3px}
.main{flex:1;min-height:0;display:flex;gap:5px}
.work{flex:1;min-width:0;display:flex;flex-direction:column}
h1{margin:5px 0 0;height:20px;padding-left:3px;background:#b9c0ca;color:#44474e;font:11px/18px ${UI};border-top:1px solid #eef1fa;flex:none}
.work tool-bar{padding-left:8px;height:26px}
edit-dialog{position:absolute;left:625px;top:292px}
</style>
<div class="title">${svg('app')}<span>RFEM 5.22.01 x64 - [200630_Fe-Achsen (1), ЗГ1*]</span></div>
<main-menu></main-menu>
<div class="bars"><tool-bar items="new open boxb boxa save list print prev | undo~ redo~ | para cirY ringY selY winY | navA* tabA* | loadN [] prv nxt eyeL* xxL* eyeG xxG~ | glas absA abs"><combo-box style="width:216px"></combo-box></tool-bar>
<tool-bar items="hand snap pl* pl2 pl3 gridP planes | cp rot mir xred info gear gears"></tool-bar>
<tool-bar items="modA modB modC modD"></tool-bar></div>
<div class="bars"><tool-bar items="node v line memb v poly v | sNode sLine sSurf | dim v dimx gl | surf v open2 v thick v solid solidN v | join v ldN ldL~ ldS ldF ldB v"></tool-bar>
<tool-bar items="pan zoomW zoomX wire wire2 | vx vy vz vmx v mic v | shade v"></tool-bar>
<tool-bar items="fr~ cyl~ | res1~ res2 res3 res4~ res5~ res6 v res7~ res8~ | doc~ ax v rain v"></tool-bar></div>
<div class="main"><nav-panel></nav-panel>
<div class="work"><model-view></model-view><h1>3.4 Нагрузки на поверхность</h1>
<tool-bar plain items="tA tB tC* tD~ tE~ | aL aR | cl* cr* cc~ | gP~ gX~ gD~ | gV~ | delR insL insR | tY tBl~ tSt~ | absY* | loadN handT | [] | prd | nxt | upd upd | glas | xls | calc | ab fx fxx~"><combo-box style="width:196px"></combo-box></tool-bar>
<load-table></load-table><sheet-tabs></sheet-tabs></div></div>
<status-bar></status-bar>
<edit-dialog></edit-dialog>`);
</script>
</body>
</html>
